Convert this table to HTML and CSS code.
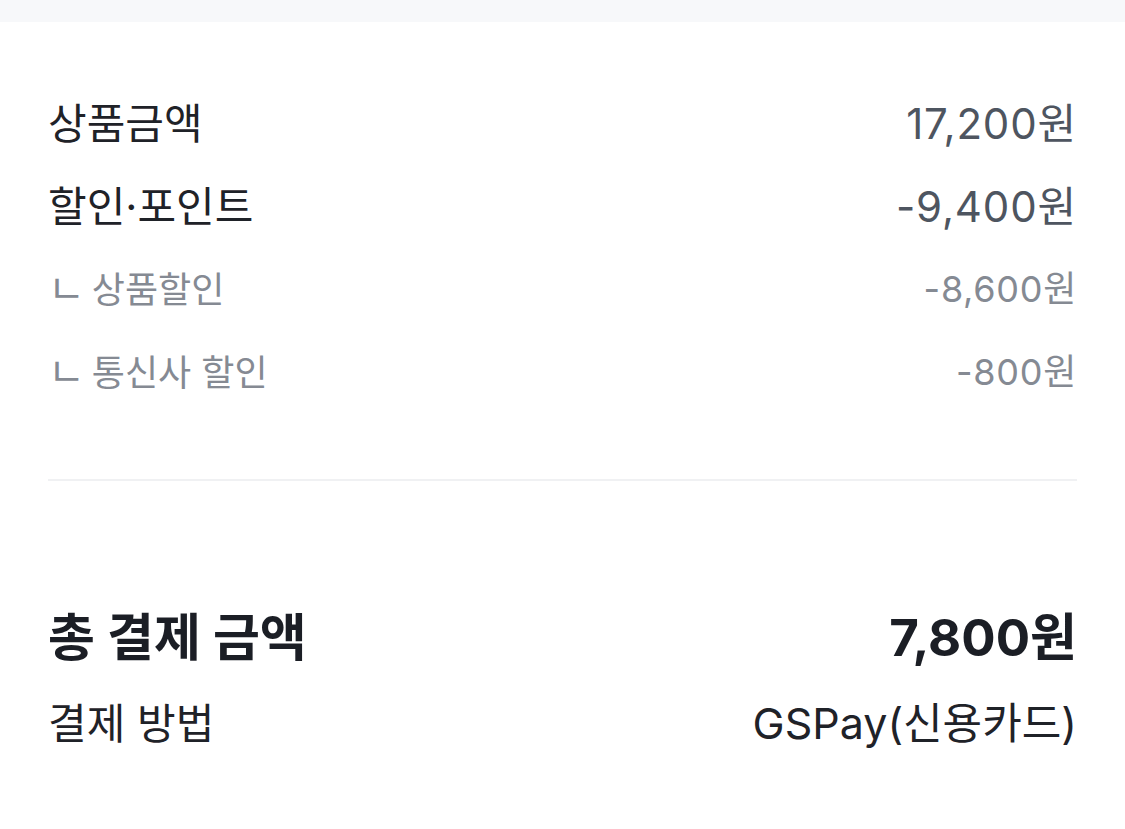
FILE: index.html
```html
<!DOCTYPE html>
<html lang="ko">
<head>
<meta charset="utf-8">
<link rel="stylesheet" href="styles.css">
</head>
<body>
<div class="topband"></div>
<section class="summary">
  <div class="row main"><span class="label">상품금액</span><span class="value">17,200원</span></div>
  <div class="row main"><span class="label">할인·포인트</span><span class="value">-9,400원</span></div>
  <div class="row sub"><span class="label"><span class="mark">ㄴ</span>상품할인</span><span class="value">-8,600원</span></div>
  <div class="row sub"><span class="label"><span class="mark">ㄴ</span>통신사 할인</span><span class="value">-800원</span></div>
  <div class="divider"></div>
  <div class="row total"><span class="label">총 결제 금액</span><span class="value">7,800원</span></div>
  <div class="row method"><span class="label">결제 방법</span><span class="value">GSPay(신용카드)</span></div>
</section>
</body>
</html>
```
FILE: styles.css
```css
html, body {
  margin: 0;
  padding: 0;
  background: #ffffff;
  font-family: "Inter", "Noto Sans CJK KR", sans-serif;
}
.topband {
  height: 22px;
  background: #f7f8fa;
}
.summary {
  padding: 56.5px 48px 60px 48px;
}
.row {
  display: flex;
  justify-content: space-between;
  align-items: center;
  height: 83px;
}
.value {
  letter-spacing: 0.02em;
}
.main .label {
  font-size: 42px;
  color: #1f2228;
}
.main .value {
  font-size: 42px;
  color: #4e5560;
}
.sub .label, .sub .value {
  font-size: 36px;
  color: #858a93;
}
.mark {
  display: inline-block;
  font-size: 40px;
  margin-left: 0;
  margin-right: 7px;
}
.divider {
  height: 2px;
  background: #f0f1f3;
  margin-top: 68.5px;
  margin-bottom: 110px;
}
.total, .method {
  height: 86px;
}
.total .label, .total .value {
  font-size: 51px;
  font-weight: 700;
  color: #1b1e25;
}
.total .value {
  letter-spacing: 0;
}
.method .label, .method .value {
  font-size: 42px;
  color: #1f2228;
}
.method .value {
  font-size: 43px;
  letter-spacing: 0;
}
```
